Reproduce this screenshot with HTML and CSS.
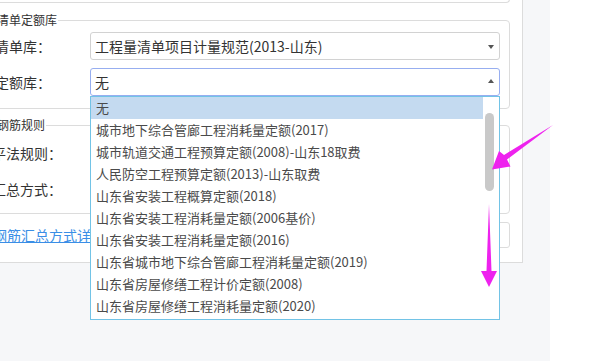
FILE: index.html
```html
<!DOCTYPE html>
<html lang="zh-CN">
<head>
<meta charset="UTF-8">
<title>工程设置</title>
<link rel="stylesheet" href="styles.css">
</head>
<body>
  <div class="stage">
    <div class="dialog">
      <div class="prev-group"></div>

      <fieldset class="group">
        <legend>清单定额库</legend>
        <div class="row">
          <label class="field-label">清单库：</label>
          <div class="select">
            <span>工程量清单项目计量规范(2013-山东)</span>
            <i class="caret"></i>
          </div>
        </div>
        <div class="row">
          <label class="field-label">定额库：</label>
          <div class="select select-open">
            <span>无</span>
            <i class="caret caret-up"></i>
            <div class="dropdown">
              <ul class="options">
                <li class="selected">无</li>
                <li>城市地下综合管廊工程消耗量定额(2017)</li>
                <li>城市轨道交通工程预算定额(2008)-山东18取费</li>
                <li>人民防空工程预算定额(2013)-山东取费</li>
                <li>山东省安装工程概算定额(2018)</li>
                <li>山东省安装工程消耗量定额(2006基价)</li>
                <li>山东省安装工程消耗量定额(2016)</li>
                <li>山东省城市地下综合管廊工程消耗量定额(2019)</li>
                <li>山东省房屋修缮工程计价定额(2008)</li>
                <li>山东省房屋修缮工程消耗量定额(2020)</li>
              </ul>
              <div class="scrollbar"><div class="thumb"></div></div>
            </div>
          </div>
        </div>
      </fieldset>

      <fieldset class="group group-rebar">
        <legend>钢筋规则</legend>
        <div class="row">
          <label class="field-label">平法规则：</label>
          <div class="select"><span>16系平法规则</span><i class="caret"></i></div>
        </div>
        <div class="row">
          <label class="field-label">汇总方式：</label>
          <div class="select"><span>按照钢筋图示尺寸-即外皮汇总</span><i class="caret"></i></div>
        </div>
      </fieldset>

      <div class="link-row">
        <a class="help-link" href="#">钢筋汇总方式详细说明</a>
        <div class="note-box"></div>
      </div>
    </div>
  </div>

  <!-- annotation arrows drawn on top of the screenshot -->
  <svg class="marks" width="601" height="361" viewBox="0 0 601 361">
    <polygon points="492,169.5 499,151 504,155 553,125 507,159.5 510.5,166.5" fill="#ee22ee"/>
    <polygon points="489,204 491.5,271 497,271 489,287 481,271 486.5,271" fill="#ee22ee"/>
  </svg>
</body>
</html>
```

FILE: styles.css
```css
body {
  margin: 0;
  background-color: #fff;
  font-family: "Noto Sans CJK SC", "Noto Sans", sans-serif;
  color: #333;
  position: relative;
  overflow: hidden;
}

.stage {
  width: 550px;
  height: 361px;
  background-color: #f6f7f9;
}

.dialog {
  display: flow-root;
  box-sizing: border-box;
  width: 523px;
  height: 263px;
  padding-right: 12px;
  background-color: #fff;
  border-right: 1px solid #dcdcdc;
  border-bottom: 1px solid #dcdcdc;
}

/* bottom edge of the group above, scrolled out of view */
.prev-group {
  box-sizing: border-box;
  height: 13px;
  margin: -10px 0 0 -14px;
  border-right: 1px solid #dcdcdc;
  border-bottom: 1px solid #dcdcdc;
  border-bottom-right-radius: 4px;
}

.group {
  margin: 8px 0 0 -14px;
  padding: 3px 9px 12px 0;
  border: 1px solid #dcdcdc;
  border-radius: 4px;
  position: relative;
}

.group legend {
  padding: 0 1px;
  margin-left: 9px;
  font-size: 12px;
  line-height: 18px;
  color: #333;
}

.row {
  display: flex;
  align-items: center;
  margin-bottom: 8px;
}

.row:last-child {
  margin-bottom: 0;
}

.field-label {
  width: 64px;
  margin-right: 39px;
  text-align: right;
  font-size: 14px;
  white-space: nowrap;
}

.select {
  flex: 1;
  position: relative;
  height: 28px;
  box-sizing: border-box;
  padding-left: 4px;
  border: 1px solid #d2d2d2;
  border-radius: 3px;
  font-size: 14px;
  line-height: 26px;
  color: #333;
}

.select-open {
  border-color: #97aef0;
  z-index: 2;
}

.caret {
  position: absolute;
  right: 5px;
  top: 12px;
  border-left: 3.5px solid transparent;
  border-right: 3.5px solid transparent;
  border-top: 4px solid #555;
}

.caret-up {
  top: 10px;
  border-top: none;
  border-bottom: 4px solid #555;
}

.dropdown {
  position: absolute;
  left: -1px;
  right: -1px;
  top: calc(100% + 1px);
  display: flex;
  background-color: #fff;
  border: 1px solid #72c3e6;
}

.options {
  list-style-type: none;
  margin: 0;
  padding: 0 0 2px 0;
  flex: 1;
}

.options li {
  height: 22px;
  padding-left: 5px;
  font-size: 13px;
  line-height: 22px;
  color: #4a4a4a;
  white-space: nowrap;
}

.options li.selected {
  background-color: #c4daf0;
}

.scrollbar {
  width: 16px;
}

.thumb {
  width: 9px;
  height: 78px;
  margin: 16px 0 0 2px;
  background-color: #c9c9c9;
  border-radius: 5px;
}

.group-rebar {
  margin-top: 7px;
  padding-top: 5px;
  padding-bottom: 10px;
}

.group-rebar .field-label {
  width: 75px;
  margin-right: 28px;
}

.link-row {
  display: flex;
  align-items: center;
  margin: 8px 0 0 -7px;
}

.help-link {
  font-size: 14px;
  color: #3a8ee6;
  text-decoration: underline;
  white-space: nowrap;
  margin-right: 20px;
}

.note-box {
  flex: 1;
  height: 26px;
  box-sizing: border-box;
  border: 1px solid #dcdcdc;
  border-radius: 3px;
}

.marks {
  position: absolute;
  top: 0;
  left: 0;
  z-index: 5;
  pointer-events: none;
}
```
